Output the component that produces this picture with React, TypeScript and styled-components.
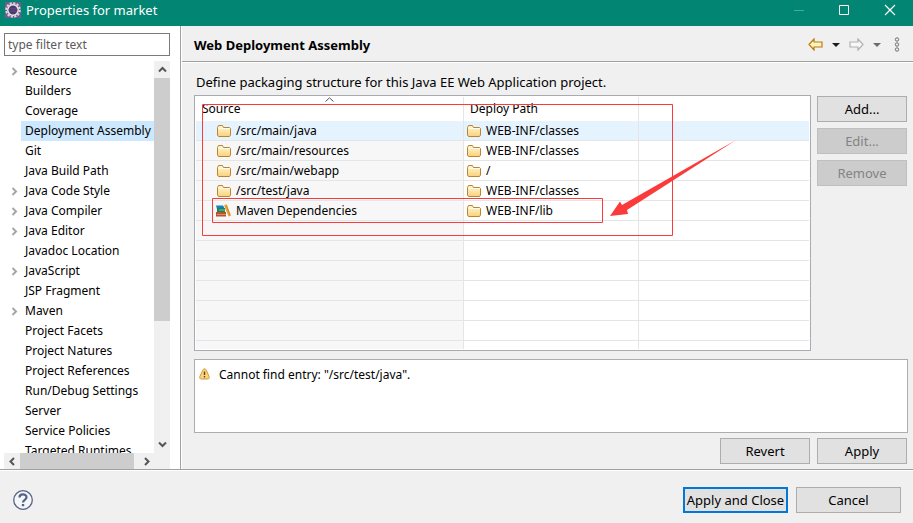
import React from "react";
import styled, { createGlobalStyle, css } from "styled-components";

const GlobalStyle = createGlobalStyle`
  *, *::before, *::after { box-sizing: border-box; }
  body { margin: 0; background: #f0f0f0; }
  body, button, input, table {
    font-family: "Noto Sans", "Open Sans", sans-serif;
    font-size: 12px;
    line-height: 20px;
    color: #000;
  }
`;

const Dialog = styled.div`
  display: flex;
  flex-direction: column;
  height: 100vh;
  background: #f0f0f0;
`;

const TitleBar = styled.header`
  display: flex;
  align-items: center;
  flex: none;
  height: 26px;
  padding: 0 17px 6px 5px;
  gap: 5px;
  background: #028673;
  color: #fff;
`;

const WindowTitle = styled.h1`
  flex: 1;
  margin: 0;
  font-size: 13px;
  font-weight: 400;
`;

const WindowControls = styled.div`
  display: flex;
  gap: 32px;
`;

const IconButton = styled.button`
  display: flex;
  align-items: center;
  justify-content: center;
  padding: 0;
  border: 0;
  background: none;
`;

const Body = styled.div`
  display: flex;
  flex: 1;
  min-height: 0;
  border-bottom: 1px solid #a0a0a0;
`;

const Sidebar = styled.nav`
  display: flex;
  flex-direction: column;
  flex: none;
  width: 181px;
  padding: 7px 10px 0 4px;
  border-right: 1px solid #a0a0a0;
  background: #fff;
`;

const FilterInput = styled.input`
  flex: none;
  width: 100%;
  height: 23px;
  margin-bottom: 5px;
  padding: 0 3px;
  border: 1px solid #7a7a7a;
  background: #fff;
  &::placeholder { color: #5a5a5a; opacity: 1; }
`;

const TreeArea = styled.div`
  display: grid;
  grid-template-columns: minmax(0, 1fr) 16px;
  grid-template-rows: minmax(0, 1fr) 16px;
  flex: 1;
  min-height: 0;
`;

const Tree = styled.ul`
  margin: 0;
  padding: 0;
  overflow: hidden;
  list-style: none;
`;

const TreeItem = styled.li`
  display: flex;
  height: 20px;
`;

const Twisty = styled.span`
  display: flex;
  align-items: center;
  flex: none;
  width: 17px;
  padding-left: 7px;
`;

const TreeLabel = styled.button<{ $selected: boolean }>`
  padding: 0 4px;
  border: 0;
  background: ${(p) => (p.$selected ? "#cce8ff" : "transparent")};
  white-space: nowrap;
`;

const ScrollBar = styled.div<{ $horizontal?: boolean }>`
  display: flex;
  flex-direction: ${(p) => (p.$horizontal ? "row" : "column")};
  background: #f0f0f0;
`;

const ScrollButton = styled(IconButton)`
  flex: none;
  width: 16px;
  height: 17px;
`;

const ScrollTrack = styled.div<{ $horizontal?: boolean }>`
  display: flex;
  flex: 1;
  flex-direction: ${(p) => (p.$horizontal ? "row" : "column")};
`;

const ScrollThumb = styled.div<{ $share: number }>`
  flex: 0 0 ${(p) => p.$share}%;
  background: #cdcdcd;
`;

const Corner = styled.div`
  background: #f0f0f0;
`;

const Main = styled.main`
  display: flex;
  flex-direction: column;
  flex: 1;
  min-width: 0;
  border-left: 1px solid #fff;
`;

const PageHeader = styled.div`
  display: flex;
  align-items: center;
  justify-content: space-between;
  flex: none;
  height: 36px;
  padding: 2px 13px 0 12px;
  border-bottom: 1px solid #a0a0a0;
`;

const PageTitle = styled.h2`
  margin: 0;
  font-size: 13px;
  font-weight: 700;
`;

const NavTools = styled.div`
  display: flex;
  align-items: center;
  gap: 9px;
`;

const MenuButton = styled(IconButton)`
  margin-left: 4px;
`;

const PageContent = styled.div`
  display: flex;
  flex-direction: column;
  flex: 1;
  min-height: 0;
  padding: 9px 5px 5px 12px;
  border-top: 1px solid #fff;
`;

const Description = styled.p`
  margin: 0 0 3px 2px;
  font-size: 13px;
`;

const Assembly = styled.div`
  display: flex;
  gap: 6px;
  flex: 1;
  min-height: 0;
`;

const TableFrame = styled.div`
  position: relative;
  flex: 1;
  min-width: 0;
  padding: 1px;
  border: 1px solid #a9abb3;
  background: #fff;
`;

const TableClip = styled.div`
  height: 100%;
  overflow: hidden;
`;

const EntryTable = styled.table`
  width: 100%;
  table-layout: fixed;
  border-collapse: separate;
  border-spacing: 0;
`;

const cell = css`
  padding: 0;
  border-right: 1px solid #e5e5e5;
  text-align: left;
  &:last-child { border-right: 0; }
`;

const HeadCell = styled.th<{ $width?: number }>`
  ${cell}
  position: relative;
  width: ${(p) => (p.$width ? `${p.$width}px` : "auto")};
  height: 24px;
  padding: 2px 6px;
  font-weight: 400;
`;

const SortMark = styled.span`
  position: absolute;
  top: 0;
  left: 0;
  right: 0;
  display: flex;
  justify-content: center;
`;

const BodyRow = styled.tr<{ $selected?: boolean }>`
  td { background: ${(p) => (p.$selected ? "#e5f3ff" : "transparent")}; }
  td:first-child {
    padding-left: 20px;
    background: ${(p) => (p.$selected ? "#e5f3ff" : "#f7f7f7")};
  }
`;

const Cell = styled.td`
  ${cell}
  height: 20px;
  padding-left: 2px;
  border-bottom: 1px solid #e5e5e5;
  line-height: 19px;
`;

const Entry = styled.span`
  display: flex;
  align-items: center;
  gap: 4px;
  height: 19px;
`;

const EntryIcon = styled.span`
  display: flex;
  justify-content: center;
  flex: none;
  width: 16px;
`;

const Annotation = styled.svg`
  position: absolute;
  top: -1px;
  left: -1px;
  pointer-events: none;
`;

const SideButtons = styled.div`
  display: flex;
  flex-direction: column;
  gap: 6px;
  padding: 1px 1px 0 0;
`;

const PushButton = styled.button<{ $wide?: boolean; $primary?: boolean }>`
  width: ${(p) => (p.$wide ? 105 : 90)}px;
  height: 26px;
  padding: 0;
  border: ${(p) => (p.$primary ? "2px solid #0078d7" : "1px solid #adadad")};
  background: #e1e1e1;
  font-size: 13px;
  &:disabled {
    border-color: #bfbfbf;
    background: #ccc;
    color: #838383;
  }
`;

const MessageBox = styled.div`
  display: flex;
  align-items: flex-start;
  gap: 9px;
  flex: none;
  height: 74px;
  margin: 8px 0 5px;
  padding: 5px 4px;
  border: 1px solid #adadad;
  background: #fff;
`;

const MessageIcon = styled.span`
  display: flex;
  align-items: center;
  height: 18px;
`;

const PageActions = styled.div`
  display: flex;
  justify-content: flex-end;
  gap: 7px;
  padding-right: 1px;
`;

const Footer = styled.footer`
  display: flex;
  align-items: center;
  gap: 8px;
  flex: none;
  height: 53px;
  padding: 5px 12px 0;
  border-top: 1px solid #fff;
`;

const Spacer = styled.div`
  flex: 1;
`;

const Chevron = ({ d, color = "#555" }: { d: string; color?: string }) => (
  <svg width="9" height="9" viewBox="0 0 9 9" fill="none" stroke={color} strokeWidth="2">
    <path d={d} />
  </svg>
);

const AppIcon = () => (
  <svg width="16" height="16" viewBox="0 0 16 16">
    <rect width="16" height="16" fill="#6f5c93" />
    <circle cx="8" cy="8" r="6.800" fill="none" stroke="#ded8d3" strokeWidth="2" strokeDasharray="2.200 1.360" />
    <circle cx="8" cy="8" r="5.200" fill="#4a3a70" stroke="#eee9e2" strokeWidth="1.500" />
    <path d="M4 6.500h8M3.500 8h9M4 9.500h8" stroke="#5c4c80" strokeWidth=".7" />
  </svg>
);

const FolderIcon = () => (
  <svg width="14" height="12" viewBox="0 0 14 12">
    <defs>
      <linearGradient id="folderFill" x1="0" y1="0" x2="0" y2="1">
        <stop offset="0" stopColor="#fff7d8" />
        <stop offset="1" stopColor="#fbd278" />
      </linearGradient>
    </defs>
    <path d="M.5 10V2.500L1.500 .5h4L6.500 2.500h6l1 1V10l-1 1.500H1.500Z" fill="url(#folderFill)" stroke="#b98434" />
    <path d="M1.500 3.500h11" stroke="#fffbe9" />
  </svg>
);

const LibraryIcon = () => (
  <svg width="16" height="13" viewBox="0 0 16 13">
    <path d="M0 1.500h7l1 1.500v2H1Z" fill="#1683b6" />
    <path d="M1 4h8v4H1Z" fill="#23805e" />
    <path d="M3 6h6" stroke="#7cc4a2" />
    <path d="M0 8h10v4.500H0Z" fill="#b4552c" />
    <path d="M1 10.500h9" stroke="#dd8f64" />
    <path d="m8 1.500 2.500-1.500L15 11.500l-2.500 1Z" fill="#e9a83c" />
    <path d="m10.500 1.500 3.500 10" stroke="#c27a1c" strokeWidth=".8" />
  </svg>
);

const WarningIcon = () => (
  <svg width="11" height="12" viewBox="0 0 11 12">
    <path d="M5.500 .8c1 0 1.500.8 1.900 1.700l2.700 6c.5 1.400 0 2.500-1.400 2.500H2.300C.9 11 .4 9.900.9 8.500l2.700-6C4 1.600 4.500.8 5.500.8Z" fill="#fbd67a" stroke="#cf9640" />
    <path d="M5.500 3.500V7M5.500 8v1.500" stroke="#5c4520" strokeWidth="1.400" />
  </svg>
);

const HistoryArrow = ({ forward = false }: { forward?: boolean }) => (
  <svg width="15" height="13" viewBox="0 0 15 13">
    <path
      d={forward ? "M14 6.500 9 1v3H1v5h8v3Z" : "M1 6.500 6 1v3h8v5H6v3Z"}
      fill={forward ? "#f8f8f8" : "#fff3bd"}
      stroke={forward ? "#b0b0b0" : "#b87a14"}
      strokeWidth="1.200"
    />
  </svg>
);

const Caret = ({ color }: { color: string }) => (
  <svg width="8" height="4" viewBox="0 0 8 4">
    <path d="M0 0h8L4 4Z" fill={color} />
  </svg>
);

const MenuDots = () => (
  <svg width="6" height="15" viewBox="0 0 6 15" fill="none" stroke="#6c6c6c">
    <circle cx="3" cy="2.500" r="1.700" />
    <circle cx="3" cy="7.500" r="1.700" />
    <circle cx="3" cy="12.500" r="1.700" />
  </svg>
);

const HelpIcon = () => (
  <svg width="22" height="22" viewBox="0 0 22 22" fill="none" stroke="#566587">
    <circle cx="11" cy="11" r="9.300" fill="#f5f6f9" strokeWidth="1.300" />
    <path d="M7.500 8.500C7.500 4.500 14.500 4.500 14.500 8.300c0 2.600-3.500 2.500-3.500 5.200" strokeWidth="2.300" />
    <path d="M11 15v2.200" strokeWidth="2.400" />
  </svg>
);

const pages = [
  { label: "Resource", children: true },
  { label: "Builders" },
  { label: "Coverage" },
  { label: "Deployment Assembly", selected: true },
  { label: "Git" },
  { label: "Java Build Path" },
  { label: "Java Code Style", children: true },
  { label: "Java Compiler", children: true },
  { label: "Java Editor", children: true },
  { label: "Javadoc Location" },
  { label: "JavaScript", children: true },
  { label: "JSP Fragment" },
  { label: "Maven", children: true },
  { label: "Project Facets" },
  { label: "Project Natures" },
  { label: "Project References" },
  { label: "Run/Debug Settings" },
  { label: "Server" },
  { label: "Service Policies" },
  { label: "Targeted Runtimes" },
];

const entries = [
  { source: "/src/main/java", path: "WEB-INF/classes", selected: true },
  { source: "/src/main/resources", path: "WEB-INF/classes" },
  { source: "/src/main/webapp", path: "/" },
  { source: "/src/test/java", path: "WEB-INF/classes" },
  { source: "Maven Dependencies", path: "WEB-INF/lib", library: true },
];

const blankRows = [0, 1, 2, 3, 4, 5, 6];

export default function App() {
  return (
    <>
      <GlobalStyle />
      <Dialog>
        <TitleBar>
          <AppIcon />
          <WindowTitle>Properties for market</WindowTitle>
          <WindowControls>
            <IconButton aria-label="Minimize" disabled>
              <svg width="14" height="12" viewBox="0 0 14 12"><path d="M2 6.500h10" stroke="#4aa999" /></svg>
            </IconButton>
            <IconButton aria-label="Maximize">
              <svg width="14" height="12" viewBox="0 0 14 12"><path d="M1.500 1.500h9v9h-9Z" fill="none" stroke="#fff" /></svg>
            </IconButton>
            <IconButton aria-label="Close">
              <svg width="12" height="12" viewBox="0 0 12 12"><path d="m1 1 10 10M11 1 1 11" stroke="#fff" strokeWidth="1.200" /></svg>
            </IconButton>
          </WindowControls>
        </TitleBar>

        <Body>
          <Sidebar>
            <FilterInput aria-label="Filter" placeholder="type filter text" />
            <TreeArea>
              <Tree>
                {pages.map((p) => (
                  <TreeItem key={p.label}>
                    <Twisty>{p.children && <Chevron d="M1.500 1 5 4.500 1.500 8" color="#a6a6a6" />}</Twisty>
                    <TreeLabel $selected={!!p.selected}>{p.label}</TreeLabel>
                  </TreeItem>
                ))}
              </Tree>
              <ScrollBar>
                <ScrollButton aria-label="Scroll up"><Chevron d="M1 6.500 4.500 3 8 6.500" /></ScrollButton>
                <ScrollTrack><ScrollThumb $share={68} /></ScrollTrack>
                <ScrollButton aria-label="Scroll down"><Chevron d="M1 2.500 4.500 6 8 2.500" /></ScrollButton>
              </ScrollBar>
              <ScrollBar $horizontal>
                <ScrollButton aria-label="Scroll left"><Chevron d="M6 1 2.500 4.500 6 8" /></ScrollButton>
                <ScrollTrack $horizontal><ScrollThumb $share={97} $horizontal /></ScrollTrack>
                <ScrollButton aria-label="Scroll right"><Chevron d="M3 1 6.500 4.500 3 8" /></ScrollButton>
              </ScrollBar>
              <Corner />
            </TreeArea>
          </Sidebar>

          <Main>
            <PageHeader>
              <PageTitle>Web Deployment Assembly</PageTitle>
              <NavTools>
                <IconButton aria-label="Back"><HistoryArrow /></IconButton>
                <IconButton aria-label="Back history"><Caret color="#1c1c1c" /></IconButton>
                <IconButton aria-label="Forward"><HistoryArrow forward /></IconButton>
                <IconButton aria-label="Forward history"><Caret color="#6c6c6c" /></IconButton>
                <MenuButton aria-label="More"><MenuDots /></MenuButton>
              </NavTools>
            </PageHeader>

            <PageContent>
              <Description>Define packaging structure for this Java EE Web Application project.</Description>
              <Assembly>
                <TableFrame>
                  <TableClip>
                    <EntryTable>
                      <thead>
                        <tr>
                          <HeadCell $width={268}>
                            Source
                            <SortMark>
                              <svg width="9" height="5" viewBox="0 0 9 5"><path d="M.5 4.500 4.500.8l4 3.700" fill="none" stroke="#555" /></svg>
                            </SortMark>
                          </HeadCell>
                          <HeadCell $width={175}>Deploy Path</HeadCell>
                          <HeadCell />
                        </tr>
                      </thead>
                      <tbody>
                        {entries.map((e) => (
                          <BodyRow key={e.source} $selected={e.selected}>
                            <Cell><Entry><EntryIcon>{e.library ? <LibraryIcon /> : <FolderIcon />}</EntryIcon>{e.source}</Entry></Cell>
                            <Cell><Entry><EntryIcon><FolderIcon /></EntryIcon>{e.path}</Entry></Cell>
                            <Cell />
                          </BodyRow>
                        ))}
                        {blankRows.map((n) => (
                          <BodyRow key={n}><Cell /><Cell /><Cell /></BodyRow>
                        ))}
                      </tbody>
                    </EntryTable>
                  </TableClip>
                  <Annotation width="560" height="150" viewBox="0 0 560 150" fill="none" stroke="#fb3b3b">
                    <path d="M8.500 9.500h470v131h-470Z" />
                    <path d="M18.500 103.500h390v24h-390Z" />
                    <path d="M416 121 426 106.500 428 110 542 45 433 115 434 119Z" fill="#fb3b3b" stroke="none" />
                  </Annotation>
                </TableFrame>
                <SideButtons>
                  <PushButton>Add...</PushButton>
                  <PushButton disabled>Edit...</PushButton>
                  <PushButton disabled>Remove</PushButton>
                </SideButtons>
              </Assembly>
              <MessageBox role="status">
                <MessageIcon><WarningIcon /></MessageIcon>
                <span>Cannot find entry: "/src/test/java".</span>
              </MessageBox>
              <PageActions>
                <PushButton>Revert</PushButton>
                <PushButton>Apply</PushButton>
              </PageActions>
            </PageContent>
          </Main>
        </Body>

        <Footer>
          <IconButton aria-label="Help"><HelpIcon /></IconButton>
          <Spacer />
          <PushButton $wide $primary>Apply and Close</PushButton>
          <PushButton $wide>Cancel</PushButton>
        </Footer>
      </Dialog>
    </>
  );
}
